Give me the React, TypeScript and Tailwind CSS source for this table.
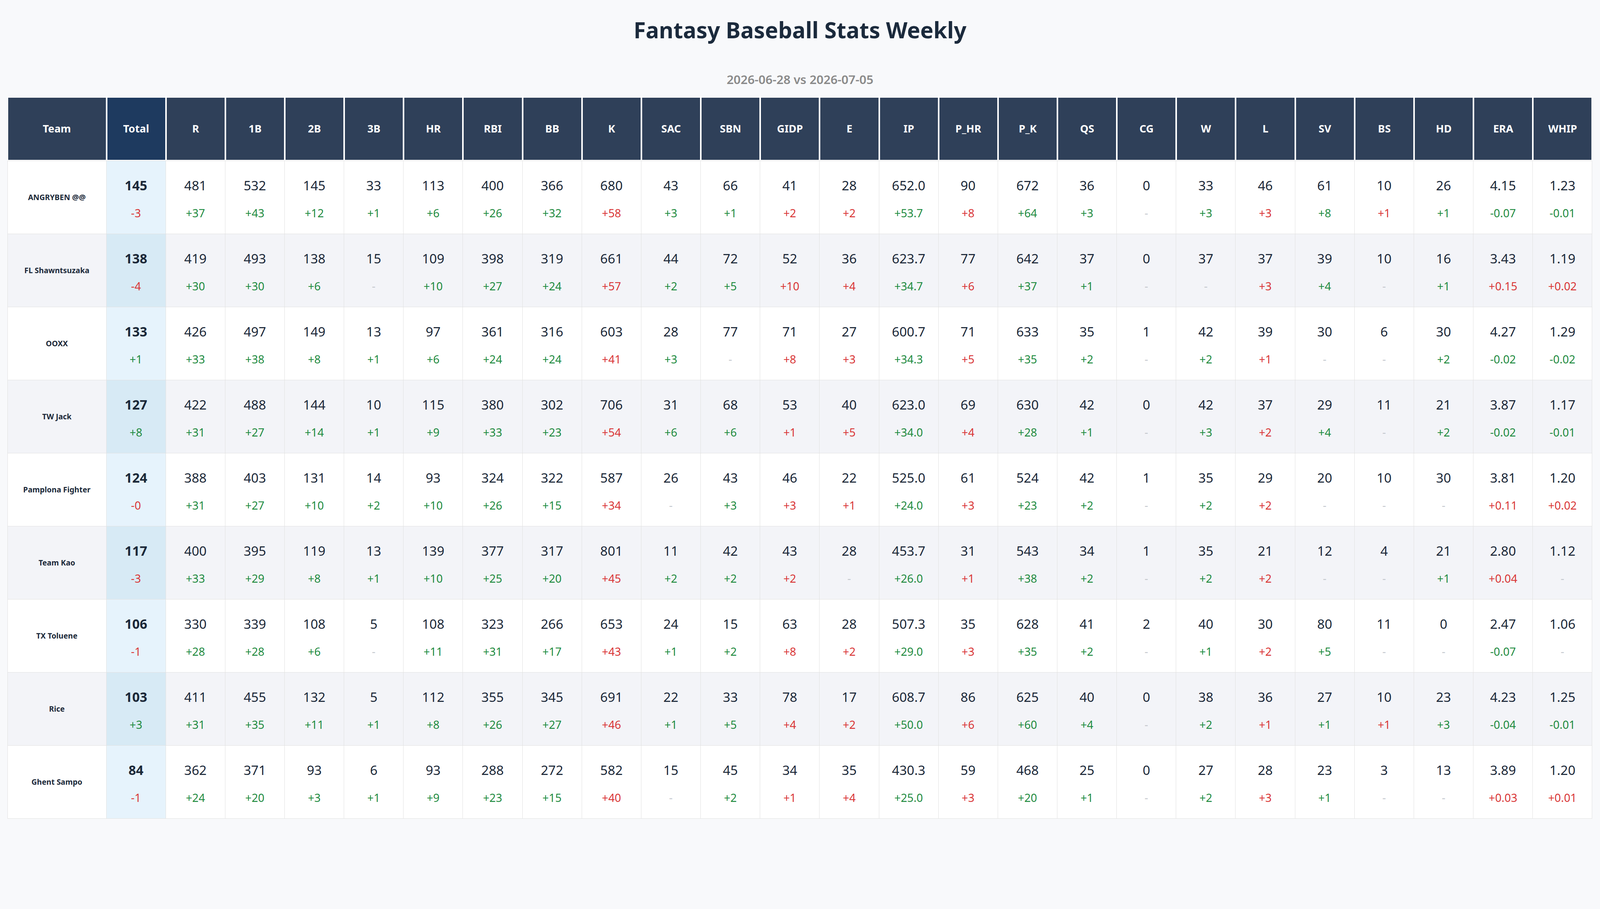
import React from "react";

const COLS = ["R","1B","2B","3B","HR","RBI","BB","K","SAC","SBN","GIDP","E","IP","P_HR","P_K","QS","CG","W","L","SV","BS","HD","ERA","WHIP"];
const BAD = new Set(["K","GIDP","E","P_HR","L","BS","ERA","WHIP"]);

type Row = { name: string; total: string; stats: string };

const ROWS: Row[] = [
  { name: "ANGRYBEN @@", total: "145 -3", stats: "481 +37|532 +43|145 +12|33 +1|113 +6|400 +26|366 +32|680 +58|43 +3|66 +1|41 +2|28 +2|652.0 +53.7|90 +8|672 +64|36 +3|0 -|33 +3|46 +3|61 +8|10 +1|26 +1|4.15 -0.07|1.23 -0.01" },
  { name: "FL Shawntsuzaka", total: "138 -4", stats: "419 +30|493 +30|138 +6|15 -|109 +10|398 +27|319 +24|661 +57|44 +2|72 +5|52 +10|36 +4|623.7 +34.7|77 +6|642 +37|37 +1|0 -|37 -|37 +3|39 +4|10 -|16 +1|3.43 +0.15|1.19 +0.02" },
  { name: "OOXX", total: "133 +1", stats: "426 +33|497 +38|149 +8|13 +1|97 +6|361 +24|316 +24|603 +41|28 +3|77 -|71 +8|27 +3|600.7 +34.3|71 +5|633 +35|35 +2|1 -|42 +2|39 +1|30 -|6 -|30 +2|4.27 -0.02|1.29 -0.02" },
  { name: "TW Jack", total: "127 +8", stats: "422 +31|488 +27|144 +14|10 +1|115 +9|380 +33|302 +23|706 +54|31 +6|68 +6|53 +1|40 +5|623.0 +34.0|69 +4|630 +28|42 +1|0 -|42 +3|37 +2|29 +4|11 -|21 +2|3.87 -0.02|1.17 -0.01" },
  { name: "Pamplona Fighter", total: "124 -0", stats: "388 +31|403 +27|131 +10|14 +2|93 +10|324 +26|322 +15|587 +34|26 -|43 +3|46 +3|22 +1|525.0 +24.0|61 +3|524 +23|42 +2|1 -|35 +2|29 +2|20 -|10 -|30 -|3.81 +0.11|1.20 +0.02" },
  { name: "Team Kao", total: "117 -3", stats: "400 +33|395 +29|119 +8|13 +1|139 +10|377 +25|317 +20|801 +45|11 +2|42 +2|43 +2|28 -|453.7 +26.0|31 +1|543 +38|34 +2|1 -|35 +2|21 +2|12 -|4 -|21 +1|2.80 +0.04|1.12 -" },
  { name: "TX Toluene", total: "106 -1", stats: "330 +28|339 +28|108 +6|5 -|108 +11|323 +31|266 +17|653 +43|24 +1|15 +2|63 +8|28 +2|507.3 +29.0|35 +3|628 +35|41 +2|2 -|40 +1|30 +2|80 +5|11 -|0 -|2.47 -0.07|1.06 -" },
  { name: "Rice", total: "103 +3", stats: "411 +31|455 +35|132 +11|5 +1|112 +8|355 +26|345 +27|691 +46|22 +1|33 +5|78 +4|17 +2|608.7 +50.0|86 +6|625 +60|40 +4|0 -|38 +2|36 +1|27 +1|10 +1|23 +3|4.23 -0.04|1.25 -0.01" },
  { name: "Ghent Sampo", total: "84 -1", stats: "362 +24|371 +20|93 +3|6 +1|93 +9|288 +23|272 +15|582 +40|15 -|45 +2|34 +1|35 +4|430.3 +25.0|59 +3|468 +20|25 +1|0 -|27 +2|28 +3|23 +1|3 -|13 -|3.89 +0.03|1.20 +0.01" },
];

function deltaClass(d: string, col: string) {
  if (d === "-") return "text-[#c3c7cd]";
  const neg = d.startsWith("-");
  const red = BAD.has(col) ? !neg : neg;
  return red ? "text-[#d93636]" : "text-[#1f8b3f]";
}

function Cell({ value, delta, col, bold }: { value: string; delta: string; col: string; bold?: boolean }) {
  return (
    <div className="h-[7.997vh] flex flex-col items-center pt-[1.72vh]">
      <div className={"text-[0.8174vw] leading-[1.892vh] text-[#1b2838] " + (bold ? "font-bold" : "font-normal")}>{value}</div>
      <div className={"mt-[1.333vh] text-[0.7vw] leading-[1.548vh] " + deltaClass(delta, col)}>{delta}</div>
    </div>
  );
}

export default function App() {
  return (
    <div className="min-h-screen bg-[#f8f9fb] font-['Noto_Sans',sans-serif] pt-[1.59vh]">
      <h1 className="text-center text-[1.385vw] leading-[3.439vh] font-bold text-[#1b2a3c]">Fantasy Baseball Stats Weekly</h1>
      <div className="mt-[2.838vh] text-center text-[0.765vw] leading-[1.72vh] font-semibold text-[#8a8a8a]">2026-06-28 vs 2026-07-05</div>
      <div className="mt-[0.989vh] px-[0.4541vw]">
        <table className="table-fixed w-[99.069vw] border-separate border-spacing-0 bg-white border-t-2 border-white">
          <colgroup>
            <col className="w-[6.199vw]" />
            <col />
            {COLS.map((c) => (
              <col key={c} />
            ))}
          </colgroup>
          <thead>
            <tr>
              {["Team", "Total", ...COLS].map((h, i) => (
                <th
                  key={h}
                  className={"p-0 border-2 border-white text-white font-bold text-[0.6585vw] " + (i === 1 ? "bg-[#1e3a5f]" : "bg-[#2f4059]")}
                >
                  <div className="h-[6.836vh] flex items-center justify-center">{h}</div>
                </th>
              ))}
            </tr>
          </thead>
          <tbody>
            {ROWS.map((r, ri) => {
              const even = ri % 2 === 1;
              const rowBg = even ? "bg-[#f3f4f8]" : "bg-white";
              const top = ri === 0 ? " border-t" : "";
              const [tv, td] = r.total.split(" ");
              return (
                <tr key={r.name} className={rowBg}>
                  <td className={"p-0 border-l border-r border-b border-[#e1e1e1]" + top}>
                    <div className="h-[7.997vh] flex items-center justify-center text-center text-[0.475vw] font-bold text-[#1b2838] px-2">
                      {r.name}
                    </div>
                  </td>
                  <td className={"p-0 border-r border-b border-[#e1e1e1] " + (even ? "bg-[#d7eaf5]" : "bg-[#e6f3fc]") + top}>
                    <Cell value={tv} delta={td} col="Total" bold />
                  </td>
                  {r.stats.split("|").map((s, ci) => {
                    const [v, d] = s.split(" ");
                    return (
                      <td key={ci} className={"p-0 border-r border-b border-[#e1e1e1]" + top}>
                        <Cell value={v} delta={d} col={COLS[ci]} />
                      </td>
                    );
                  })}
                </tr>
              );
            })}
          </tbody>
        </table>
      </div>
    </div>
  );
}
